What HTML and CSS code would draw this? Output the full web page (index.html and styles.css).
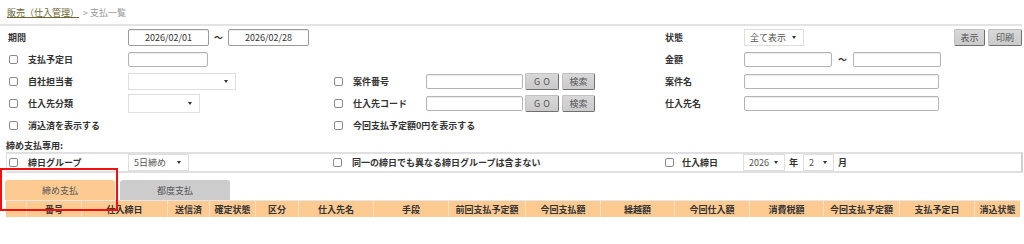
FILE: index.html
```html
<!DOCTYPE html>
<html lang="ja">
<head>
<meta charset="utf-8">
<title>支払一覧</title>
<link rel="stylesheet" href="styles.css">
</head>
<body>
<div class="page">
  <div class="crumb"><a class="crumb-link" href="#">販売（仕入管理）</a><span class="crumb-sep">&gt; 支払一覧</span></div>
  <div class="rule"></div>

  <div class="form">
    <!-- row 1 -->
    <div class="lbl">期間</div>
    <div class="field"><span class="inp date">2026/02/01</span><span class="tilde">～</span><span class="inp date">2026/02/28</span></div>
    <div></div><div></div>
    <div class="lbl">状態</div>
    <div class="field"><span class="sel w60">全て表示</span><span class="btns"><span class="btn b-show">表示</span><span class="btn b-print">印刷</span></span></div>

    <!-- row 2 -->
    <div class="chk-lbl"><span class="chk"></span>支払予定日</div>
    <div class="field"><span class="inp w80"></span></div>
    <div></div><div></div>
    <div class="lbl">金額</div>
    <div class="field"><span class="inp w88"></span><span class="tilde t2">～</span><span class="inp w88"></span></div>

    <!-- row 3 -->
    <div class="chk-lbl"><span class="chk"></span>自社担当者</div>
    <div class="field"><span class="sel w108"></span></div>
    <div class="chk-lbl"><span class="chk"></span>案件番号</div>
    <div class="field"><span class="inp w97"></span><span class="btn go">GO</span><span class="btn srch">検索</span></div>
    <div class="lbl">案件名</div>
    <div class="field"><span class="inp w195"></span></div>

    <!-- row 4 -->
    <div class="chk-lbl"><span class="chk"></span>仕入先分類</div>
    <div class="field"><span class="sel w72 tall"></span></div>
    <div class="chk-lbl"><span class="chk"></span>仕入先コード</div>
    <div class="field"><span class="inp w97"></span><span class="btn go">GO</span><span class="btn srch">検索</span></div>
    <div class="lbl">仕入先名</div>
    <div class="field"><span class="inp w195"></span></div>

    <!-- row 5 -->
    <div class="chk-lbl span2"><span class="chk"></span>消込済を表示する</div>
    <div class="chk-lbl span2"><span class="chk"></span>今回支払予定額0円を表示する</div>
    <div></div><div></div>
  </div>

  <div class="sub-title">締め支払専用:</div>
  <div class="box">
    <div class="chk-lbl"><span class="chk"></span>締日グループ</div>
    <div class="field"><span class="sel w61">5日締め</span></div>
    <div class="chk-lbl"><span class="chk"></span>同一の締日でも異なる締日グループは含まない</div>
    <div class="chk-lbl r-chk"><span class="chk"></span>仕入締日</div>
    <div class="field"><span class="sel w42">2026</span><span class="unit">年</span><span class="sel w31">2</span><span class="unit">月</span></div>
  </div>

  <div class="tabs">
    <span class="tab active">締め支払</span>
    <span class="tab">都度支払</span>
  </div>

  <div class="thead">
    <span class="th c20"></span>
    <span class="th c55">番号</span>
    <span class="th c86">仕入締日</span>
    <span class="th c42">送信済</span>
    <span class="th c46">確定状態</span>
    <span class="th c43">区分</span>
    <span class="th c75">仕入先名</span>
    <span class="th c75">手段</span>
    <span class="th c77">前回支払予定額</span>
    <span class="th c75">今回支払額</span>
    <span class="th c74">繰越額</span>
    <span class="th c75">今回仕入額</span>
    <span class="th c74">消費税額</span>
    <span class="th c76">今回支払予定額</span>
    <span class="th c75">支払予定日</span>
    <span class="th c46">消込状態</span>
  </div>

  <div class="highlight"></div>
</div>
</body>
</html>
```

FILE: styles.css
```css
html, body {
  margin: 0;
  padding: 0;
  background: #fff;
}
body {
  font-family: "Noto Sans CJK JP", "Noto Sans", sans-serif;
  font-size: 9px;
  color: #333;
}
.page {
  position: relative;
  width: 1024px;
  height: 244px;
  overflow: hidden;
}

/* breadcrumb */
.crumb {
  height: 24px;
  display: flex;
  align-items: center;
  padding-left: 7px;
  line-height: 1;
}
.crumb-link {
  color: #6b6432;
  text-decoration: underline;
}
.crumb-sep {
  color: #9a9a9a;
  margin-left: 4px;
}
.rule {
  height: 2px;
  background: #e3e3e3;
  margin-right: 2px;
}

/* form grid */
.form {
  display: grid;
  grid-template-columns: 122px 203px 95px 237px 81px 1fr;
  grid-auto-rows: 22px;
  align-items: center;
  padding: 0 2px 0 6px;
}
.lbl {
  font-weight: 700;
  padding-left: 2px;
  line-height: 1;
}
.chk-lbl {
  display: flex;
  align-items: center;
  font-weight: 700;
  line-height: 1;
  white-space: nowrap;
}
.span2 {
  grid-column: span 2;
}
.chk {
  width: 9px;
  height: 9px;
  box-sizing: border-box;
  border: 1px solid #8a8a8a;
  border-radius: 2px;
  background: #fff;
  margin: 0 10px 0 3px;
  flex: none;
}
.field {
  display: flex;
  align-items: center;
}

.inp {
  display: inline-flex;
  align-items: center;
  justify-content: center;
  box-sizing: border-box;
  height: 15px;
  border: 1px solid #b4b4b4;
  border-radius: 2px;
  background: #fff;
  box-shadow: inset 0 1px 1px rgba(0, 0, 0, 0.08);
  color: #333;
  font-weight: 400;
}
.date {
  width: 81px;
  height: 17px;
  border-color: #9a9a9a;
}
.tilde {
  width: 19px;
  text-align: center;
  font-weight: 700;
}
.t2 {
  width: 21px;
}
.w80 { width: 80px; }
.w88 { width: 88px; }
.w97 { width: 97px; }
.w195 { width: 195px; }

.sel {
  display: inline-flex;
  align-items: center;
  justify-content: space-between;
  box-sizing: border-box;
  height: 17px;
  padding: 0 7px 0 5px;
  border: 1px solid #dedede;
  background: #fff;
  color: #555;
  line-height: 1;
}
.sel::after {
  content: "";
  margin-left: auto;
  border-top: 3px solid #333;
  border-left: 2.5px solid transparent;
  border-right: 2.5px solid transparent;
}
.sel.tall { height: 19px; }
.w60 { width: 60px; }
.w61 { width: 61px; }
.w108 { width: 108px; }
.w72 { width: 72px; }
.w42 { width: 42px; padding-right: 6px; }
.w31 { width: 31px; padding-right: 6px; }

.btns {
  margin-left: auto;
  display: flex;
  gap: 3px;
}
.btn {
  display: inline-flex;
  align-items: center;
  justify-content: center;
  box-sizing: border-box;
  height: 17px;
  background: linear-gradient(#d8d8d8, #cacaca);
  border: 1px solid #c0c0c0;
  border-right-color: #6f6f6f;
  border-bottom-color: #6f6f6f;
  border-radius: 2px;
  color: #555;
  line-height: 1;
}
.b-show { width: 31px; }
.b-print { width: 34px; }
.go {
  width: 34px;
  margin-left: 2px;
  letter-spacing: 3px;
  padding-left: 3px;
}
.srch {
  width: 33px;
  margin-left: 3px;
}

/* closing-payment section */
.sub-title {
  font-weight: 700;
  line-height: 12px;
  margin: 4px 0 0 6px;
}
.box {
  display: grid;
  grid-template-columns: 121px 203px 332px 80px 1fr;
  align-items: center;
  height: 17px;
  margin: 0 1px 0 6px;
  border: 2px solid #e0e0e0;
  border-left-width: 1px;
  border-right-color: #cfcfcf;
  background: #fff;
}
.box .chk {
  margin-left: 2px;
}
.r-chk .chk {
  margin-right: 8px;
}
.unit {
  font-weight: 700;
  margin: 0 5px 0 4px;
}

/* tabs */
.tabs {
  display: flex;
  gap: 5px;
  margin: 7px 0 0 5px;
  height: 20px;
}
.tab {
  width: 110px;
  display: flex;
  align-items: center;
  justify-content: center;
  background: #cccccc;
  color: #555;
  border-radius: 3px 3px 0 0;
  line-height: 1;
}
.tab.active {
  background: #fdca92;
}

/* table header */
.thead {
  display: flex;
  margin: 0 4px 0 6px;
  height: 16px;
  border-top: 1px solid #e6e6e6;
  background: #fdca92;
}
.th {
  flex: none;
  display: flex;
  align-items: center;
  justify-content: center;
  font-weight: 700;
  line-height: 1;
  border-left: 1px solid #fbe0c2;
  box-sizing: border-box;
}
.th:first-child { border-left: none; }
.c20 { width: 20px; }
.c42 { width: 42px; }
.c43 { width: 43px; }
.c46 { width: 46px; }
.c55 { width: 55px; }
.c74 { width: 74px; }
.c75 { width: 75px; }
.c76 { width: 76px; }
.c77 { width: 77px; }
.c86 { width: 86px; }

/* red annotation frame */
.highlight {
  position: absolute;
  left: 0;
  top: 168px;
  width: 118px;
  height: 43px;
  box-sizing: border-box;
  border: 2px solid #f01010;
}
```
